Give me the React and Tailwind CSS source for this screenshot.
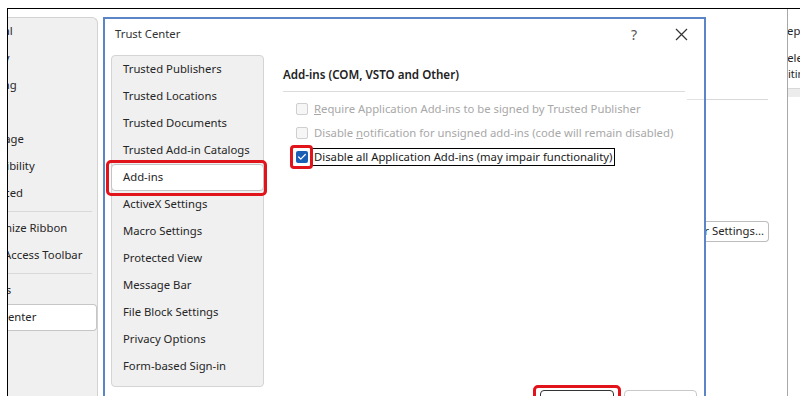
import { Check } from 'lucide-react';

const font = { fontFamily: '"Noto Sans", "Open Sans", sans-serif' };

const backItems = [
  { label: 'General' },
  { label: 'Display' },
  { label: 'Proofing' },
  { label: 'Save' },
  { label: 'Language' },
  { label: 'Accessibility' },
  { label: 'Advanced' },
  { sep: true },
  { label: 'Customize Ribbon' },
  { label: 'Quick Access Toolbar' },
  { sep: true },
  { label: 'Add-ins' },
  { label: 'Trust Center', active: true },
];

const navItems = [
  'Trusted Publishers',
  'Trusted Locations',
  'Trusted Documents',
  'Trusted Add-in Catalogs',
  'Add-ins',
  'ActiveX Settings',
  'Macro Settings',
  'Protected View',
  'Message Bar',
  'File Block Settings',
  'Privacy Options',
  'Form-based Sign-in',
];

const BackPanel = () => (
  <div className="w-[90px] mt-[8px] shrink-0 bg-[#f0f0f0] border-r border-t border-[#d2d2d2] rounded-tr-[6px] overflow-hidden">
    {backItems.map((it, i) =>
      it.sep ? (
        <div key={i} className="h-[8px] flex items-center">
          <div className="h-px w-[84px] bg-[#d9d9d9]" />
        </div>
      ) : (
        <div
          key={i}
          className={
            'h-[27px] flex items-center whitespace-nowrap text-[11.3px] text-[#262626] ' +
            (it.active ? 'bg-white border border-l-0 border-[#c6c6c6] rounded-r-[4px]' : '')
          }
        >
          <span className="-ml-[37px]">{it.label}</span>
        </div>
      )
    )}
  </div>
);

const Box = ({ checked }) =>
  checked ? (
    <span className="w-[12px] h-[12px] rounded-[2px] bg-[#1a5fb4] flex items-center justify-center shrink-0">
      <Check size={10} strokeWidth={3} color="#fff" />
    </span>
  ) : (
    <span className="w-[12px] h-[12px] rounded-[2px] border border-[#cfcfcf] bg-[#f6f6f6] shrink-0" />
  );

const Dialog = () => (
  <div className="ml-[5px] mt-[8px] w-[603px] h-[400px] shrink-0 border-2 border-[#5b85c6] bg-white flex flex-col">
    <div className="h-[30px] flex items-center pl-[10px] text-[11.3px] text-[#333]">
      <span className="flex-1">Trust Center</span>
      <span className="text-[14px] text-[#555] w-[20px] text-center">?</span>
      <span className="ml-[27px] mr-[13px] w-[20px] flex justify-center">
        <svg width="13" height="13" viewBox="0 0 13 13">
          <path d="M1 1L12 12M12 1L1 12" stroke="#333" strokeWidth="1.2" />
        </svg>
      </span>
    </div>

    <div className="flex pt-[6px] pl-[6px] h-[338px]">
      <div className="w-[153px] h-[332px] bg-[#f0f0f0] border border-[#d4d4d4] rounded-[4px]">
        {navItems.map((n) => (
          <div
            key={n}
            className={
              'relative h-[27px] flex items-center pl-[11px] text-[11.3px] text-[#262626] whitespace-nowrap ' +
              (n === 'Add-ins' ? 'bg-white border border-[#c4c4c4] rounded-[4px] -mx-px' : '')
            }
          >
            {n}
            {n === 'Add-ins' && (
              <span className="absolute -left-[6px] -right-[4px] -top-[5px] -bottom-[6px] border-[3px] border-[#e1141c] rounded-[5px]" />
            )}
          </div>
        ))}
      </div>

      <div className="ml-[19px] flex-1 pt-[11px]">
        <div className="text-[11.6px] font-semibold text-[#222] leading-[18px]">Add-ins (COM, VSTO and Other)</div>
        <div className="flex items-start">
          <div className="mt-[7px] h-px flex-1 bg-[#dcdcdc]" />
          <div className="mt-[15px] ml-[2px] h-px w-[17px] bg-[#e2e2e2]" />
        </div>
        <div className="-mt-[3px] text-[11.3px] whitespace-nowrap">
          <div className="h-[24px] flex items-center pl-[13px] text-[#a8a8a8]">
            <Box />
            <span className="ml-[3px] px-[2px] border border-transparent leading-[16px]">
              <u>R</u>equire Application Add-ins to be signed by Trusted Publisher
            </span>
          </div>
          <div className="h-[24px] flex items-center pl-[13px] text-[#a8a8a8]">
            <Box />
            <span className="ml-[3px] px-[2px] border border-transparent leading-[16px]">
              Disable <u>n</u>otification for unsigned add-ins (code will remain disabled)
            </span>
          </div>
          <div className="h-[24px] flex items-center pl-[13px] text-[#1a1a1a]">
            <span className="relative flex">
              <Box checked />
              <span className="absolute -left-[6px] -right-[5px] -top-[6px] -bottom-[6px] border-[3px] border-[#e1141c] rounded-[4px]" />
            </span>
            <span className="ml-[3px] px-[2px] border border-black leading-[16px]">
              Disable all Application Add-ins (may impair functionality)
            </span>
          </div>
        </div>
      </div>
    </div>

    <div className="flex justify-end pt-[3px] pr-[7px] gap-[10px]">
      <div className="relative w-[74px] h-[24px] border border-[#333] rounded-[4px] bg-white flex items-center justify-center text-[11.3px]">
        OK
        <span className="absolute -left-[8px] -right-[8px] -top-[6px] -bottom-[6px] border-[3px] border-[#e1141c] rounded-[5px]" />
      </div>
      <div className="w-[73px] h-[24px] border border-[#c8c8c8] rounded-[4px] bg-white flex items-center justify-center text-[11.3px]">
        Cancel
      </div>
    </div>
  </div>
);

const BackRight = () => (
  <div className="flex flex-1 h-full">
    <div className="w-[81px] shrink-0">
      <div className="mt-[90px] h-px w-[62px] bg-[#d8d8d8]" />
      <div className="mt-[121px] h-[21px] w-[63px] border border-l-0 border-[#bdbdbd] rounded-r-[4px] flex items-center justify-end pr-[4px] overflow-hidden whitespace-nowrap text-[11.3px] text-[#262626]">
        Trust Center Settings...
      </div>
    </div>
    <div className="w-px bg-[#a8a8a8] shrink-0" />
    <div className="flex-1 overflow-hidden text-[11.3px] text-[#262626] whitespace-nowrap">
      <div className="h-[18px] mt-[13px] flex items-center">
        <span className="-ml-[8px]">Replace</span>
      </div>
      <div className="h-[18px] mt-[9px] flex items-center">
        <span className="-ml-[7px]">Select</span>
      </div>
      <div className="h-[14px] flex items-center text-[11px]">
        <span className="-ml-[13px]">Editing</span>
      </div>
      <div className="mt-[7px] h-[9px] bg-[#ececec] border-t border-[#d8d8d8]" />
    </div>
  </div>
);

export default function App() {
  return (
    <div className="w-[800px] h-[396px] bg-white overflow-hidden pt-[8px] pl-[7px]" style={font}>
      <div className="h-[400px] border-t border-l border-black flex">
        <BackPanel />
        <Dialog />
        <BackRight />
      </div>
    </div>
  );
}
